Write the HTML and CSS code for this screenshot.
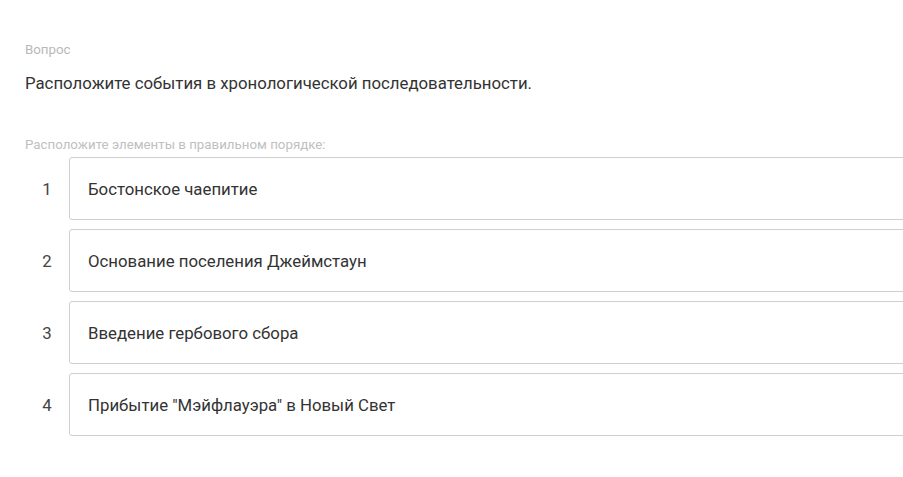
FILE: index.html
```html
<!DOCTYPE html>
<html lang="ru">
<head>
<meta charset="utf-8">
<link rel="stylesheet" href="styles.css">
</head>
<body>
<div class="page">
  <div class="caption">Вопрос</div>
  <div class="question">Расположите события в хронологической последовательности.</div>
  <div class="hint">Расположите элементы в правильном порядке:</div>
  <div class="list">
    <div class="row"><div class="num">1</div><div class="item">Бостонское чаепитие</div></div>
    <div class="row"><div class="num">2</div><div class="item">Основание поселения Джеймстаун</div></div>
    <div class="row"><div class="num">3</div><div class="item">Введение гербового сбора</div></div>
    <div class="row"><div class="num">4</div><div class="item">Прибытие "Мэйфлауэра" в Новый Свет</div></div>
  </div>
</div>
</body>
</html>
```
FILE: styles.css
```css
html, body {
  margin: 0;
  padding: 0;
  background: #fff;
  overflow: hidden;
}
body {
  font-family: Roboto, "Liberation Sans", sans-serif;
  color: #333;
}
.page {
  padding: 42px 0 0 25px;
  width: 900px;
}
.caption {
  font-size: 13.3px;
  line-height: 16px;
  color: #b8b8b8;
}
.question {
  margin-top: 15px;
  font-size: 16.8px;
  line-height: 20px;
  color: #333;
}
.hint {
  margin-top: 44px;
  font-size: 13.3px;
  line-height: 16px;
  color: #c0c0c0;
}
.list {
  margin-top: 4px;
  display: flex;
  flex-direction: column;
  gap: 9px;
}
.row {
  display: flex;
  align-items: center;
}
.num {
  width: 44px;
  text-align: center;
  font-size: 16.8px;
  color: #444;
}
.item {
  flex: 1;
  height: 61px;
  border: 1px solid #cfcfcf;
  border-radius: 3px;
  padding-left: 18px;
  display: flex;
  align-items: center;
  font-size: 16.8px;
  color: #333;
}
```
